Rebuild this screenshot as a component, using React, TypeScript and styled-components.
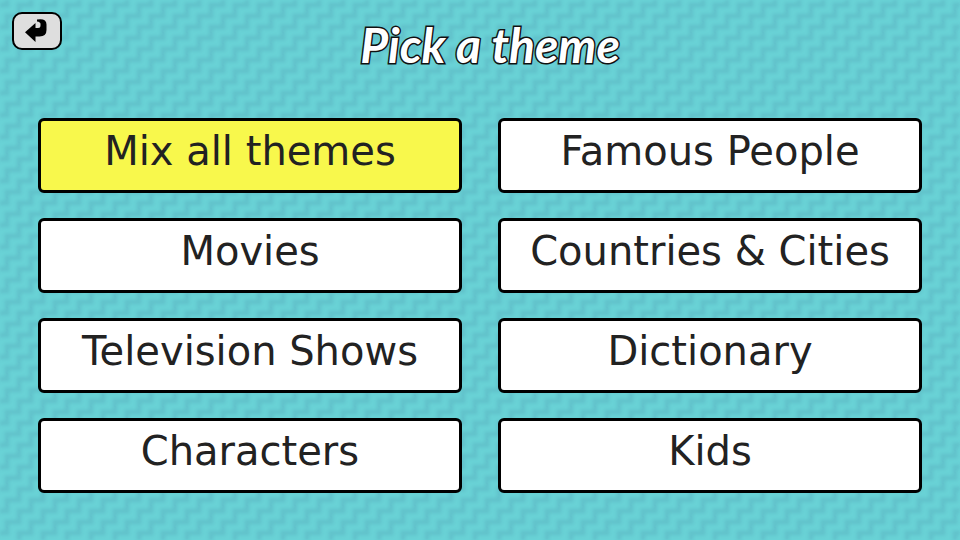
import React from "react";
import styled, { createGlobalStyle } from "styled-components";

const GlobalStyle = createGlobalStyle`
  * { box-sizing: border-box; }
  body {
    margin: 0;
    background: #69d2d6;
    font-family: "DejaVu Sans", sans-serif;
  }
`;

const Page = styled.div`
  position: relative;
  min-height: 100vh;
  overflow: hidden;
  isolation: isolate;
`;

const Pattern = styled.svg`
  position: absolute;
  inset: 0;
  width: 100%;
  height: 100%;
  z-index: -1;
`;

const Header = styled.header`
  display: grid;
  grid-template-columns: 50px 1fr 50px;
  align-items: start;
  height: 118px;
  padding: 12px 12px 0;
`;

const BackButton = styled.button`
  display: grid;
  place-items: center;
  height: 38px;
  padding: 0;
  border: 2px solid #000;
  border-radius: 10px;
  background: #dedede;
  cursor: pointer;
`;

const Title = styled.h1`
  margin: 0;
  padding-left: 20px;
  text-align: center;
  color: #fff;
  font: italic 700 48px/66px Lato, sans-serif;
  -webkit-text-stroke: 3px #111;
  paint-order: stroke fill;
`;

const Themes = styled.main`
  display: grid;
  grid-template-columns: 1fr 1fr;
  gap: 25px 36px;
  padding: 0 38px 46px;
`;

const ThemeButton = styled.button<{ $active?: boolean }>`
  height: 75px;
  padding: 0 0 10px;
  border: 3px solid #000;
  border-radius: 6px;
  background: ${(p) => (p.$active ? "#f8f84c" : "#fff")};
  color: #222;
  font: 40px/48px "DejaVu Sans", sans-serif;
  white-space: nowrap;
  cursor: pointer;
`;

const themes = [
  "Mix all themes",
  "Famous People",
  "Movies",
  "Countries & Cities",
  "Television Shows",
  "Dictionary",
  "Characters",
  "Kids",
];

function Backdrop() {
  return (
    <Pattern aria-hidden="true">
      <defs>
        <pattern
          id="stairs"
          width="24"
          height="22"
          patternUnits="userSpaceOnUse"
          patternTransform="translate(7 5)"
        >
          <path
            d="M-24 22V11H-12V0H0V-11M-12 33V22H0V11H12V0H24V-11M12 33V22H24V11H36"
            fill="none"
            stroke="#62c3cb"
            strokeWidth="5"
          />
        </pattern>
        <filter id="soften" x="0" y="0" width="100%" height="100%" colorInterpolationFilters="sRGB">
          <feGaussianBlur stdDeviation="1.5" />
        </filter>
      </defs>
      <rect width="100%" height="100%" fill="#69d2d6" />
      <rect width="100%" height="100%" fill="url(#stairs)" filter="url(#soften)" />
    </Pattern>
  );
}

export default function App() {
  return (
    <Page>
      <GlobalStyle />
      <Backdrop />
      <Header>
        <BackButton aria-label="Back">
          <svg width="24" height="26" viewBox="0 0 24 26" aria-hidden="true">
            <path d="M0 14.3 10.5 5v5H13q2.5 0 2.5-2.5V6q0-2-3.5-2.5V1.5q9.5-1.5 9.5 5V12q0 6.5-7 6.5h-4V24Z" />
          </svg>
        </BackButton>
        <Title>Pick a theme</Title>
      </Header>
      <Themes>
        {themes.map((name, i) => (
          <ThemeButton key={name} $active={i === 0}>
            {name}
          </ThemeButton>
        ))}
      </Themes>
    </Page>
  );
}
